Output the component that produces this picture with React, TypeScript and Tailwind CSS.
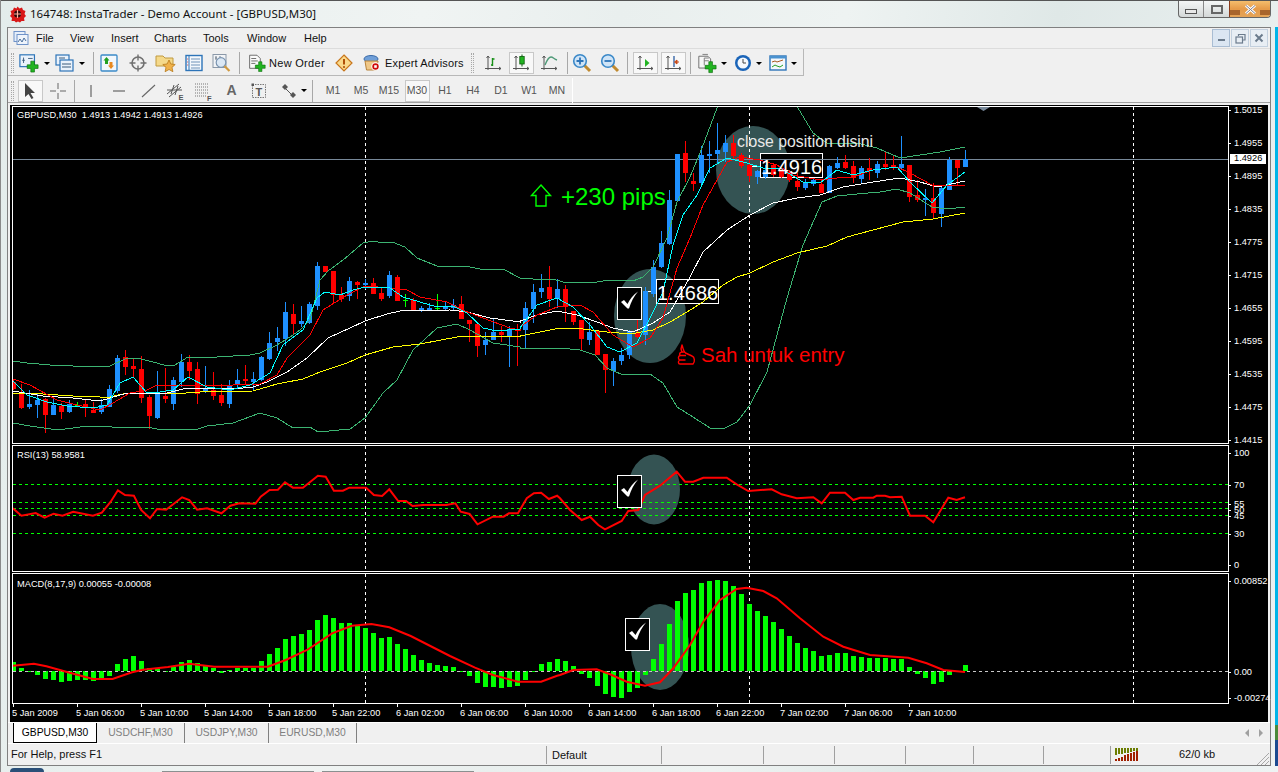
type Bar = [string, number, number, number, number];

// candle bodies and wicks as read off the chart: colour, body top, body bottom, wick top, wick bottom
const BARS_LEFT: Bar[] = [
  ["r",455,478,450,480],["r",487,534,462,536],["b",522,531,480,537],["b",510,525,490,563],["r",508,555,505,608],
  ["b",525,555,508,556],["r",528,546,520,567],["b",522,546,510,550],["g",525,526,515,530],["r",522,532,510,560],
  ["r",541,549,515,549],["b",525,546,508,552],["b",477,530,465,532],["b",384,483,375,490],["r",381,411,360,435],
  ["r",408,417,388,440],["r",417,503,378,518],["r",501,558,495,597],["b",492,564,423,566],["r",498,507,414,518],
  ["b",450,522,441,540],["b",396,456,372,470],["r",396,423,376,450],["r",417,491,395,522],["b",475,486,408,490],
  ["r",480,498,426,510],["r",495,519,462,528],["b",465,522,450,534],["b",450,465,417,475],["r",447,453,405,465],
  ["b",447,456,426,480],["b",381,450,378,452],["b",339,387,306,390],["b",324,336,292,362],["b",246,327,216,348],
  ["r",252,282,222,315],["b",273,282,228,291],["b",222,280,215,282],["b",108,228,96,240],["r",108,126,108,126],
  ["r",123,195,123,222],["r",195,207,170,215],["b",153,198,141,213],["r",156,165,153,207],["b",159,165,147,176],
  ["r",159,192,144,192],["r",190,207,175,213],["b",135,198,123,204],["r",141,213,135,213],["g",210,211,193,231],
  ["r",210,243,205,243],["b",234,243,228,246],["b",234,240,218,243],["g",233,234,192,240],["b",228,237,215,240],
  ["b",226,234,207,240],["r",222,267,198,267],["r",270,282,270,335],["r",282,348,282,381],["b",330,345,306,375],
  ["b",306,330,268,330],["r",306,315,288,336],["b",297,318,288,411],["r",297,303,282,408],
];
const BARS_RIGHT: Bar[] = [
  ["b",609,675,590,730],["b",561,612,537,655],["b",549,561,507,580],["r",546,582,484,606],["b",552,582,522,610],
  ["r",552,606,540,650],["r",618,650,618,660],["r",645,702,645,735],["b",681,705,650,720],["r",678,750,678,750],
  ["r",747,795,747,864],["b",768,798,760,843],["b",750,768,730,780],["b",678,750,675,762],["r",684,696,645,700],
  ["b",559,690,545,720],["b",486,567,465,575],["b",414,486,378,490],["b",285,417,255,420],["b",147,288,147,290],
  ["r",144,204,108,230],["r",228,237,204,258],["b",150,234,123,240],["b",147,152,108,205],["b",135,147,54,175],
  ["b",114,141,90,170],["r",114,153,90,165],["r",150,183,144,190],["r",180,213,165,230],["b",198,216,195,237],
  ["b",195,215,180,222],["r",180,210,175,215],["r",195,216,185,220],["r",200,225,195,230],["r",228,246,205,258],
  ["b",234,249,222,255],["b",225,237,222,243],["r",237,264,225,264],["b",183,264,180,265],["b",174,189,156,192],
  ["r",171,189,150,192],["r",183,219,168,235],["b",189,222,183,237],["r",189,198,158,225],["b",177,204,168,219],
  ["r",177,186,138,195],["r",180,189,150,195],["b",177,189,93,195],["r",180,276,180,291],["r",270,285,225,291],
  ["b",279,285,252,333],["r",279,324,235,340],["b",249,327,240,366],["b",165,255,155,255],["r",165,189,165,240],
  ["b",162,186,135,186],
];

const COLORS: Record<string, string> = { r: "#ff0000", b: "#1e90ff", g: "#00ff00" };

const join = (a: number[][], b: number[][]) =>
  [...a.map(([x, y]) => `${Math.round(x / 3)},${Math.round(230 + y / 3)}`), ...b.map(([x, y]) => `${Math.round(520 + x / 3)},${Math.round(105 + y / 3)}`)].join(" ");

const UPPER = join(
  [[38,394],[80,400],[150,405],[220,409],[330,409],[380,385],[410,384],[470,400],[500,409],[525,405],[565,380],[650,380],[750,376],[780,370],[830,345],[870,320],[900,300],[930,270],[960,150],[985,122],[1030,90],[1090,38],[1120,33],[1150,38],[1175,35],[1215,50],[1250,85],[1310,108],[1395,108],[1440,116],[1510,118],[1560,143]],
  [[0,518],[40,522],[100,522],[130,530],[230,532],[270,525],[340,528],[370,515],[400,485],[440,400],[470,290],[510,215],[545,130],[592,8],[620,-60],[800,-60],[835,8],[880,85],[920,115],[1010,115],[1070,130],[1140,158],[1200,150],[1260,140],[1335,125]]
);
const LOWER = join(
  [[38,580],[90,588],[175,601],[240,590],[300,588],[370,593],[440,592],[470,598],[535,601],[595,598],[620,588],[700,578],[780,550],[830,565],[880,595],[930,590],[955,607],[1050,598],[1095,565],[1150,490],[1190,450],[1240,360],[1310,295],[1370,283],[1410,300],[1480,340],[1560,350]],
  [[0,730],[60,733],[120,728],[180,735],[225,750],[260,790],[310,810],[390,806],[430,835],[470,905],[520,935],[570,968],[610,973],[650,950],[690,900],[740,800],[800,580],[850,420],[905,290],[950,272],[1010,268],[1080,262],[1130,252],[1170,265],[1235,305],[1280,312],[1335,307]]
);
const YELLOW = join(
  [[38,490],[130,493],[220,498],[300,502],[330,500],[380,490],[440,490],[520,492],[600,487],[760,484],[830,463],[910,448],[960,425],[1040,398],[1095,375],[1180,352],[1260,342],[1370,322],[1440,318],[1560,320]],
  [[0,692],[60,680],[120,670],[190,671],[260,680],[330,686],[400,675],[450,650],[500,620],[550,590],[610,540],[650,515],[690,505],[760,470],[830,443],[920,422],[980,395],[1060,375],[1150,350],[1240,342],[1335,325]]
);
const WHITE = join(
  [[38,482],[130,497],[220,505],[300,512],[330,505],[380,488],[440,490],[500,490],[550,478],[620,475],[700,477],[760,472],[800,455],[860,425],[920,385],[985,325],[1050,295],[1095,273],[1160,252],[1200,242],[1350,240],[1400,245],[1470,265],[1560,275]],
  [[0,648],[50,630],[110,618],[170,630],[230,650],[280,670],[340,680],[400,655],[450,620],[510,515],[550,440],[620,375],[690,330],[760,295],[830,280],[900,270],[970,245],[1060,232],[1140,220],[1200,232],[1250,245],[1335,228]]
);
const RED = join(
  [[38,448],[90,465],[170,510],[230,525],[300,540],[340,520],[390,490],[440,480],[470,466],[560,465],[650,468],[700,465],[780,462],[830,435],[860,385],[930,315],[970,240],[1040,195],[1095,168],[1170,175],[1220,180],[1260,200],[1340,215],[1395,242],[1450,265],[1530,295],[1560,300]],
  [[0,665],[50,630],[110,605],[180,600],[220,620],[280,690],[340,725],[390,700],[430,640],[470,490],[510,400],[550,300],[590,225],[620,170],[660,155],[720,165],[770,180],[820,210],[900,225],[950,220],[1000,215],[1060,195],[1130,185],[1170,205],[1235,240],[1335,242]]
);
const CYAN = join(
  [[38,452],[80,495],[140,515],[200,528],[280,535],[320,525],[360,460],[400,440],[440,490],[480,485],[520,480],[565,442],[620,470],[690,480],[750,465],[810,430],[850,345],[910,300],[950,205],[975,187],[1020,195],[1060,180],[1095,170],[1170,175],[1210,200],[1260,215],[1310,232],[1360,228],[1400,250],[1450,295],[1490,302],[1560,298]],
  [[0,670],[50,600],[110,580],[160,605],[210,660],[260,725],[300,740],[350,715],[390,640],[430,560],[460,420],[490,330],[530,270],[570,190],[620,160],[680,175],[730,190],[780,190],[850,230],[900,235],[950,195],[1000,210],[1060,195],[1130,185],[1170,230],[1235,295],[1280,240],[1335,200]]
);

const lowerJoin = (a: number[][], b: number[][]) =>
  [...a.map(([x, y]) => `${(x / 2.8).toFixed(1)},${(445 + y / 3).toFixed(1)}`), ...b.map(([x, y]) => `${(560 + x / 3).toFixed(1)},${(445 + y / 3).toFixed(1)}`)].join(" ");

const RSI = lowerJoin(
  [[36,190],[60,212],[100,204],[125,218],[150,206],[175,212],[205,200],[260,212],[285,203],[310,170],[330,136],[350,150],[375,152],[395,195],[420,220],[440,192],[465,194],[510,157],[530,165],[552,194],[580,190],[620,205],[645,182],[670,175],[715,176],[730,155],[755,135],[778,134],[798,112],[820,128],[848,128],[890,92],[912,95],[935,137],[960,137],[978,128],[1025,128],[1047,150],[1070,153],[1090,133],[1115,168],[1137,168],[1155,183],[1185,180],[1250,180],[1275,175],[1290,200],[1315,207],[1337,238],[1380,215],[1410,215],[1425,205],[1450,205],[1475,160],[1495,145],[1515,143],[1537,162],[1560,152]],
  [[0,160],[30,195],[65,225],[90,215],[115,240],[135,253],[185,228],[205,198],[235,195],[255,150],[300,122],[350,80],[375,110],[400,110],[430,98],[500,98],[530,118],[565,138],[635,133],[665,148],[710,160],[760,157],[785,175],[810,143],[855,143],[880,165],[900,158],[940,158],[950,152],[975,152],[990,157],[1025,155],[1050,212],[1095,212],[1120,232],[1165,158],[1190,165],[1215,157]]
);
const SIGNAL = lowerJoin(
  [[36,662],[95,656],[130,664],[190,682],[260,702],[315,702],[370,682],[400,674],[470,666],[530,656],[600,665],[750,665],[800,645],[860,615],[930,565],[985,542],[1040,537],[1090,547],[1150,573],[1260,633],[1330,668],[1380,690],[1450,710],[1515,710],[1560,692]],
  [[0,690],[40,675],[110,673],[150,688],[200,710],[255,722],[300,712],[340,670],[390,600],[430,530],[480,465],[530,432],[560,428],[610,438],[650,460],[720,520],[790,575],[850,605],[930,630],[1045,638],[1100,655],[1150,675],[1215,681]]
);

const MACD = [
  651,669,682,690,702,705,711,708,705,705,708,699,693,657,642,633,648,670,672,678,667,651,645,655,663,669,684,676,669,669,
  669,648,627,609,582,573,567,555,525,510,519,534,534,540,549,564,579,576,597,612,630,645,654,660,663,666,678,693,714,726,
  726,729,726,723,705,680,657,651,642,648,663,687,699,723,747,756,759,741,729,690,642,597,537,468,444,435,414,408,405,408,
  423,447,477,498,513,531,552,573,594,609,618,633,630,624,624,633,636,639,639,639,642,642,666,687,699,717,711,690,682,660,
];

const PRICES = ["1.5015","1.4955","1.4895","1.4835","1.4775","1.4715","1.4655","1.4595","1.4535","1.4475","1.4415"];
const TIMES = ["5 Jan 2009","5 Jan 06:00","5 Jan 10:00","5 Jan 14:00","5 Jan 18:00","5 Jan 22:00","6 Jan 02:00","6 Jan 06:00","6 Jan 10:00","6 Jan 14:00","6 Jan 18:00","6 Jan 22:00","7 Jan 02:00","7 Jan 06:00","7 Jan 10:00"];
const MENU = [
  { label: "File", width: "w-[34px]" },
  { label: "View", width: "w-[41px]" },
  { label: "Insert", width: "w-[43px]" },
  { label: "Charts", width: "w-[49px]" },
  { label: "Tools", width: "w-[44px]" },
  { label: "Window", width: "w-[57px]" },
  { label: "Help", width: "w-[30px]" },
];
const PERIODS = ["M1","M5","M15","M30","H1","H4","D1","W1","MN"];

function GridLines({ y1, y2 }: { y1: number; y2: number }) {
  return (
    <g stroke="#ffffff" strokeDasharray="3 3" shapeRendering="crispEdges">
      {[365, 749, 1133].map((x) => (
        <line key={x} x1={x} x2={x} y1={y1} y2={y2} />
      ))}
    </g>
  );
}

function Candles() {
  const draw = (bar: Bar, i: number, y: (v: number) => number) => {
    const x = 13 + 8 * i;
    const top = y(bar[1]);
    return (
      <g key={i} fill={COLORS[bar[0]]}>
        <rect x={x} y={y(bar[3])} width={1} height={Math.max(1, y(bar[4]) - y(bar[3]))} />
        {bar[0] === "g" ? (
          <rect x={x - 2} y={top} width={5} height={1} />
        ) : (
          <rect x={x - 2} y={top} width={5} height={Math.max(1, y(bar[2]) - top)} />
        )}
      </g>
    );
  };
  return (
    <g shapeRendering="crispEdges">
      {BARS_LEFT.map((bar, i) => draw(bar, i, (v) => Math.round(230 + v / 3)))}
      {BARS_RIGHT.map((bar, i) => draw(bar, i + 64, (v) => Math.round(105 + v / 3)))}
    </g>
  );
}

function CheckBox({ x, y }: { x: number; y: number }) {
  return (
    <g transform={`translate(${x} ${y})`}>
      <rect x="0.5" y="0.5" width="24" height="32" fill="#000000" stroke="#ffffff" shapeRendering="crispEdges" />
      <path d="M4 15 L7 13 L10.5 17 C13 12 16 8 21 4.5 C17 9 14 15 12 21.5 L10.5 21.5 Z" fill="#ffffff" />
    </g>
  );
}

function PricePane() {
  return (
    <div className="relative h-[338px] w-[1217px] border border-white overflow-hidden">
      <svg viewBox="13 107 1215 336" className="block h-[336px] w-[1215px]">
        <ellipse cx="753" cy="170" rx="37" ry="44" fill="#345353" />
        <ellipse cx="650" cy="316" rx="36" ry="47" fill="#345353" />
        <g fill="#000000" stroke="#ffffff" shapeRendering="crispEdges">
          <rect x="760.5" y="153.5" width="62" height="24" />
          <rect x="656.5" y="279.5" width="62" height="24" />
        </g>
        <g stroke="#ffffff" shapeRendering="crispEdges">
          <line x1="752" x2="760" y1="166.5" y2="166.5" />
          <line x1="646" x2="656" y1="291.5" y2="291.5" />
        </g>
        <GridLines y1={107} y2={443} />
        <line x1="13" x2="1228" y1="159.5" y2="159.5" stroke="#778899" shapeRendering="crispEdges" />
        <polygon points="977,107 990,107 983.5,111" fill="#778899" />
        <Candles />
        <g fill="none" shapeRendering="crispEdges">
          <polyline points={UPPER} stroke="#3cb371" />
          <polyline points={LOWER} stroke="#3cb371" />
          <polyline points={YELLOW} stroke="#ffff00" />
          <polyline points={WHITE} stroke="#ffffff" />
          <polyline points={RED} stroke="#ff0000" />
          <polyline points={CYAN} stroke="#00ffff" />
        </g>
        <polygon points="541,185 550.5,195.5 546,195.5 546,206 536,206 536,195.5 531.5,195.5" fill="none" stroke="#00ff00" strokeWidth="1.4" />
        <CheckBox x={617} y={287} />
        <g transform="translate(670 340)" fill="none" stroke="#ff0000" strokeWidth="1.4" strokeLinejoin="round">
          <path d="M12 5 C13.500 9 13 11 15.500 13 L22 16 C25 17 25 22 23 24 L10 24 C8 24 8 21 9.500 20 C8 19 8 16 10 15.500 C9 14 10 12 12 12 L11 9 Z" />
          <path d="M10 15.500h6M9.500 20h6M12 12h3" />
        </g>
      </svg>
      <div className="absolute left-[4px] top-[3px] text-[9.25px] leading-[10px] text-white whitespace-pre">GBPUSD,M30  1.4913 1.4942 1.4913 1.4926</div>
      <div className="absolute left-[548px] top-[76px] text-[24px] leading-[28px] text-[#00ff00]">+230 pips</div>
      <div className="absolute left-[724px] top-[26px] text-[15.8px] leading-[18px] text-[#e8e8e8]">close position disini</div>
      <div className="absolute left-[748px] top-[48px] text-[20px] leading-[24px] text-white">1.4916</div>
      <div className="absolute left-[644px] top-[174px] text-[20px] leading-[24px] text-white">1.4686</div>
      <div className="absolute left-[688px] top-[236px] text-[20.5px] leading-[24px] text-[#ff0000]">Sah untuk entry</div>
    </div>
  );
}

function RsiPane() {
  return (
    <div className="relative mt-px h-[127px] w-[1217px] border border-white overflow-hidden">
      <svg viewBox="13 446 1215 125" className="block h-[125px] w-[1215px]">
        <ellipse cx="654" cy="489.5" rx="26" ry="35" fill="#345353" />
        <GridLines y1={446} y2={571} />
        <g stroke="#00ff00" strokeDasharray="3 3" shapeRendering="crispEdges">
          {[484, 502, 508, 515, 533].map((y) => (
            <line key={y} x1={13} x2={1228} y1={y + 0.5} y2={y + 0.5} />
          ))}
        </g>
        <polyline points={RSI} fill="none" stroke="#ff0000" strokeWidth="2" />
        <CheckBox x={617} y={475} />
      </svg>
      <div className="absolute left-[4px] top-[4px] text-[9.25px] leading-[10px] text-white">RSI(13) 58.9581</div>
    </div>
  );
}

function MacdPane() {
  return (
    <div className="relative mt-px h-[131px] w-[1217px] border border-white overflow-hidden">
      <svg viewBox="13 574 1215 129" className="block h-[129px] w-[1215px]">
        <ellipse cx="660" cy="647" rx="29" ry="43" fill="#345353" />
        <GridLines y1={574} y2={703} />
        <g fill="#00ff00" shapeRendering="crispEdges">
          {MACD.map((z, i) => {
            const y = Math.round(445 + z / 3);
            return <rect key={i} x={11 + 8 * i} y={Math.min(y, 671)} width={5} height={Math.max(1, Math.abs(y - 671))} />;
          })}
        </g>
        <line x1="13" x2="1228" y1="671.5" y2="671.5" stroke="#c8c8c8" strokeDasharray="3 3" shapeRendering="crispEdges" />
        <polyline points={SIGNAL} fill="none" stroke="#ff0000" strokeWidth="2" />
        <CheckBox x={625} y={618} />
      </svg>
      <div className="absolute left-[4px] top-[5px] text-[9.25px] leading-[10px] text-white">MACD(8,17,9) 0.00055 -0.00008</div>
    </div>
  );
}

function AxisLabel({ label, className }: { label: string; className?: string }) {
  return (
    <div className={`flex items-center text-[9.25px] text-white ${className ?? ""}`}>
      <span className="h-px w-[2px] shrink-0 bg-white" />
      <span className="ml-[3px] whitespace-nowrap leading-[6px]">{label}</span>
    </div>
  );
}

function ChartArea() {
  return (
    <div className="mx-[2px] flex h-[617px] flex-col bg-black pl-[2px] pt-px">
      <div className="flex">
        <PricePane />
        <div className="relative flex h-[338px] flex-col gap-[25px]">
          {PRICES.map((p) => (
            <AxisLabel key={p} label={p} className="h-[8px]" />
          ))}
          <div className="absolute left-[1px] top-[48px] flex h-[10px] w-[36px] items-center bg-white pl-[4px] text-[9.25px] leading-none text-black">1.4926</div>
        </div>
      </div>
      <div className="flex">
        <div>
          <RsiPane />
        </div>
        <div className="mt-px flex h-[127px] flex-col">
          <AxisLabel label="100" className="mt-[8px] h-0" />
          <AxisLabel label="70" className="mt-[32px] h-0" />
          <AxisLabel label="55" className="mt-[19px] h-0" />
          <AxisLabel label="50" className="mt-[6px] h-0" />
          <AxisLabel label="45" className="mt-[6px] h-0" />
          <AxisLabel label="30" className="mt-[18px] h-0" />
          <AxisLabel label="0" className="mt-[31px] h-0" />
        </div>
      </div>
      <div className="flex">
        <div>
          <MacdPane />
        </div>
        <div className="mt-px flex h-[131px] flex-col">
          <AxisLabel label="0.00852" className="mt-[8px] h-0" />
          <AxisLabel label="0.00" className="mt-[91px] h-0" />
          <AxisLabel label="-0.00274" className="mt-[26px] h-0" />
        </div>
      </div>
      <div className="flex w-[1217px]">
        {TIMES.map((t) => (
          <div key={t} className="w-[64px] shrink-0">
            <div className="ml-px h-[3px] w-px bg-white" />
            <div className="mt-[1px] whitespace-nowrap text-[9.25px] leading-[11px] text-white">{t}</div>
          </div>
        ))}
      </div>
    </div>
  );
}

/* ---- toolbar icons ---- */

function Axes() {
  return <path d="M5 3v14M2 15.5h16M3.5 5L5 3l1.5 2M16 14l2 1.5-2 1.5" fill="none" stroke="#555" strokeWidth="1" />;
}

function Plus() {
  return <path d="M13 9h4v4h4v4h-4v4h-4v-4H9v-4h4z" fill="#22b422" stroke="#0a6a0a" strokeWidth="0.7" />;
}

const icons = {
  mdi: (
    <svg width="16" height="16" viewBox="0 0 16 16">
      <rect x="1" y="1.5" width="11" height="10" fill="#e6eefa" stroke="#6f92c8" />
      <rect x="4" y="4.5" width="11" height="10" fill="#eef3fb" stroke="#6f92c8" />
      <path d="M5 12l2-3 2 3 2-4 2 3" fill="none" stroke="#4a6f9c" />
    </svg>
  ),
  newChart: (
    <svg width="22" height="20" viewBox="0 0 22 22">
      <rect x="1" y="2" width="16" height="13" fill="#eaf2fb" stroke="#2d74b8" strokeWidth="1.3" />
      <path d="M5 5v6M3.5 8h3M10 6h5" stroke="#3a5a7a" strokeWidth="1" />
      <Plus />
    </svg>
  ),
  profiles: (
    <svg width="20" height="20" viewBox="0 0 20 20">
      <rect x="1" y="2" width="13" height="10" fill="#eaf2fb" stroke="#2d74b8" strokeWidth="1.2" />
      <rect x="5" y="7" width="13" height="11" fill="#eaf2fb" stroke="#2d74b8" strokeWidth="1.2" />
      <path d="M7 11h9M7 14h9M4 5h6" stroke="#3a5a7a" strokeWidth="1" />
    </svg>
  ),
  market: (
    <svg width="18" height="18" viewBox="0 0 18 18">
      <rect x="1" y="1" width="16" height="16" rx="1" fill="#f2f7fc" stroke="#3b8ac8" strokeWidth="1.3" />
      <path d="M6.500 3l3 3.500H8V10H5V6.500H3.500z" fill="#22a022" />
      <path d="M11 15l-3-3.500h1.500V8h3v3.500H14z" fill="#e88a20" />
    </svg>
  ),
  cross: (
    <svg width="20" height="20" viewBox="0 0 20 20" fill="none" stroke="#707070">
      <circle cx="10" cy="10" r="6" strokeWidth="1.6" />
      <path d="M10 1.500v6M10 12.500v6M1.500 10h6M12.500 10h6" strokeWidth="1.4" />
    </svg>
  ),
  navigator: (
    <svg width="22" height="20" viewBox="0 0 22 20">
      <path d="M1 3h7l2 2h8v8H1z" fill="#f5d98a" stroke="#c09a40" />
      <path d="M14 7l1.900 4 4.300.5-3.200 2.900.9 4.300-3.900-2.200-3.900 2.200.9-4.300-3.200-2.900 4.300-.5z" fill="#f0b24a" stroke="#b87818" strokeWidth="0.8" />
    </svg>
  ),
  terminal: (
    <svg width="18" height="18" viewBox="0 0 18 18">
      <rect x="1" y="1.500" width="16" height="15" fill="#f4f8fc" stroke="#2d74b8" strokeWidth="1.4" />
      <path d="M4 2v14" stroke="#2d74b8" />
      <path d="M6 5h9M6 8h9M6 11h9M6 14h9" stroke="#6f92b8" />
      <path d="M2.200 5h1M2.200 8h1M2.200 11h1" stroke="#d04040" />
    </svg>
  ),
  tester: (
    <svg width="20" height="20" viewBox="0 0 20 20">
      <rect x="1" y="1.500" width="13" height="13" fill="#f2f4f7" stroke="#8a98a8" />
      <path d="M4 3v4M3 5h2M8 3v5M7 6h2" stroke="#707c88" />
      <circle cx="9" cy="9.500" r="4.800" fill="#dbe8f5" stroke="#7a94b0" strokeWidth="1.2" />
      <path d="M12.500 13l5 5" stroke="#d09a40" strokeWidth="2.2" />
    </svg>
  ),
  newOrder: (
    <svg width="18" height="18" viewBox="0 0 22 21" className="mr-[3px]">
      <path d="M2 1h9l4 4v12H2z" fill="#fafafa" stroke="#555" strokeWidth="1" />
      <path d="M4 5h6M4 8h8M4 11h5" stroke="#555" />
      <Plus />
    </svg>
  ),
  warn: (
    <svg width="18" height="18" viewBox="0 0 18 18">
      <path d="M9 1l8 8-8 8-8-8z" fill="#fad98a" stroke="#c8761c" strokeWidth="1.2" />
      <path d="M9 5v5.500" stroke="#b05008" strokeWidth="2" />
      <circle cx="9" cy="13" r="1.100" fill="#b05008" />
    </svg>
  ),
  expert: (
    <svg width="18" height="18" viewBox="0 0 18 18">
      <ellipse cx="8" cy="5" rx="7" ry="3.500" fill="#6f9fd8" stroke="#3a6aa8" />
      <path d="M2 7h13l-1.500 9h-10z" fill="#f0c888" stroke="#b88238" />
      <circle cx="12.500" cy="12.500" r="4.200" fill="#ffffff" />
      <circle cx="12.500" cy="12.500" r="3.200" fill="#d00a0a" />
      <rect x="11.200" y="11.200" width="2.600" height="2.600" fill="#ffffff" />
    </svg>
  ),
  bars: (
    <svg width="20" height="20" viewBox="0 0 20 20">
      <Axes />
      <path d="M9.500 5v8M9.500 12H8M9.500 6H11.500" stroke="#189018" strokeWidth="1.4" fill="none" />
    </svg>
  ),
  candle: (
    <svg width="20" height="20" viewBox="0 0 20 20">
      <Axes />
      <path d="M11 1.500v12" stroke="#0a5a0a" />
      <rect x="8.800" y="3.500" width="4.400" height="7.500" fill="#22b422" stroke="#0a5a0a" strokeWidth="0.8" />
    </svg>
  ),
  line: (
    <svg width="20" height="20" viewBox="0 0 20 20">
      <Axes />
      <path d="M6 12C8 7 10 4 12 4s3 2 6 3" stroke="#4f9a78" strokeWidth="1.4" fill="none" />
    </svg>
  ),
  zoomIn: (
    <svg width="20" height="20" viewBox="0 0 20 20">
      <path d="M12 12l6 6" stroke="#c08a30" strokeWidth="3" />
      <circle cx="8" cy="8" r="6.300" fill="#cfe4f7" stroke="#3a88c8" strokeWidth="1.6" />
      <path d="M4.500 8h7M8 4.500v7" stroke="#2d74b8" strokeWidth="1.8" />
    </svg>
  ),
  zoomOut: (
    <svg width="20" height="20" viewBox="0 0 20 20">
      <path d="M12 12l6 6" stroke="#c08a30" strokeWidth="3" />
      <circle cx="8" cy="8" r="6.300" fill="#cfe4f7" stroke="#3a88c8" strokeWidth="1.6" />
      <path d="M4.500 8h7" stroke="#2d74b8" strokeWidth="1.8" />
    </svg>
  ),
  autoScroll: (
    <svg width="20" height="20" viewBox="0 0 20 20">
      <Axes />
      <path d="M10 6l4.500 4-4.500 4z" fill="#22b422" />
    </svg>
  ),
  shift: (
    <svg width="20" height="20" viewBox="0 0 20 20">
      <Axes />
      <path d="M11 3v11" stroke="#1a4f9a" strokeWidth="1.2" />
      <path d="M16 9h-2.500M11.500 9l2.500-2v4z" fill="#c84a18" stroke="#c84a18" />
    </svg>
  ),
  template: (
    <svg width="20" height="21" viewBox="0 0 22 22">
      <path d="M2 3h10l3 3v10H2z" fill="#f7f7f7" stroke="#666" />
      <path d="M6 1h6M8 5h5M8 8h5M8 5v8" stroke="#777" />
      <Plus />
    </svg>
  ),
  clock: (
    <svg width="18" height="18" viewBox="0 0 18 18">
      <circle cx="9" cy="9" r="8" fill="#1a64b8" />
      <circle cx="9" cy="9" r="5.500" fill="#f4f8fc" />
      <path d="M9 5v4h3" stroke="#444" fill="none" />
    </svg>
  ),
  windows: (
    <svg width="18" height="16" viewBox="0 0 18 16">
      <rect x="1" y="1" width="16" height="14" fill="#f4f8fc" stroke="#2d74b8" strokeWidth="1.4" />
      <rect x="1" y="1" width="16" height="2.500" fill="#4a92d0" />
      <path d="M3 7l3-1 2 1 3-1 3-1" stroke="#a85a20" fill="none" />
      <path d="M3 12l3-2 2 1 3 1 3-2" stroke="#22a022" fill="none" />
    </svg>
  ),
  cursor: (
    <svg width="16" height="18" viewBox="0 0 16 18">
      <path d="M3 1v14l3.500-3 3 5 2-1-3-5h4.500z" fill="#444" />
    </svg>
  ),
  crosshair: (
    <svg width="18" height="18" viewBox="0 0 18 18" stroke="#666">
      <path d="M9 1v6M9 11v6M1 9h6M11 9h6" />
    </svg>
  ),
  vertical: (
    <svg width="14" height="14" viewBox="0 0 14 14" stroke="#666" strokeWidth="1.2">
      <path d="M7 1v12" />
    </svg>
  ),
  horizontal: (
    <svg width="14" height="14" viewBox="0 0 14 14" stroke="#666" strokeWidth="1.2">
      <path d="M1 7h12" />
    </svg>
  ),
  trend: (
    <svg width="16" height="16" viewBox="0 0 16 16" stroke="#666" strokeWidth="1.1">
      <path d="M2 14L15 2" />
    </svg>
  ),
  channel: (
    <svg width="20" height="20" viewBox="0 0 20 20" stroke="#555">
      <path d="M1 13L13 3M3 16L15 6M5 13l3-9M9 14l3-9M1 9h15" strokeWidth="1" />
      <text x="12.500" y="19" fontSize="7.500" fill="#555" stroke="none" fontFamily="Liberation Sans" fontWeight="700">E</text>
    </svg>
  ),
  fib: (
    <svg width="20" height="20" viewBox="0 0 20 20" stroke="#777" strokeDasharray="1 1">
      <path d="M1 3h14M1 6h14M1 9h14M1 12h14M1 15h11" />
      <text x="13" y="19.500" fontSize="7.500" fill="#555" stroke="none" fontFamily="Liberation Sans" fontWeight="700">F</text>
    </svg>
  ),
  textBox: (
    <svg width="16" height="16" viewBox="0 0 16 16">
      <rect x="1.500" y="1.500" width="13" height="13" fill="none" stroke="#777" strokeDasharray="1.500 1" />
      <rect x="0.500" y="0.500" width="2.500" height="2.500" fill="#555" />
      <text x="4.500" y="12.500" fontSize="11" fill="#555" fontFamily="Liberation Sans" fontWeight="700">T</text>
    </svg>
  ),
  arrows: (
    <svg width="16" height="16" viewBox="0 0 16 16" fill="#555">
      <path d="M1 4l3-3 3 3-3 3z" />
      <path d="M9 12l3-3 3 3-3 3z" />
      <path d="M5 6l5 5" stroke="#555" />
    </svg>
  ),
};

function Grip() {
  return <div className="h-[20px] w-[3px] shrink-0 border-x border-dotted border-[#a8a8a8]" />;
}

function Sep({ className }: { className?: string }) {
  return <div className={`h-[22px] w-px shrink-0 bg-[#a8a8a8] ${className ?? ""}`} />;
}

function Btn({ children, width, active }: { children: React.ReactNode; width: string; active?: boolean }) {
  return (
    <div className={`flex h-[24px] shrink-0 items-center justify-center ${width}`}>
      <div className={`flex h-[22px] w-[25px] items-center justify-center ${active ? "border border-[#c8c8c8] bg-[#f8f8f8]" : ""}`}>{children}</div>
    </div>
  );
}

function DropBtn({ children, width }: { children: React.ReactNode; width: string }) {
  return (
    <div className={`flex h-[24px] shrink-0 items-center justify-center gap-[4px] ${width}`}>
      {children}
      <span className="h-0 w-0 border-x-[3px] border-t-[3px] border-x-transparent border-t-black" />
    </div>
  );
}

function ToolbarMain() {
  return (
    <div className="flex h-[27px] w-[796px] items-center border-b border-r border-b-[#b8b8b8] border-r-[#b8b8b8] pl-[3px] pt-[2px]">
      <Grip />
      <DropBtn width="ml-[3px] w-[34px]">{icons.newChart}</DropBtn>
      <DropBtn width="ml-[2px] w-[34px]">{icons.profiles}</DropBtn>
      <Sep className="ml-[6px]" />
      <Btn width="w-[29px]">{icons.market}</Btn>
      <Btn width="w-[29px]">{icons.cross}</Btn>
      <Btn width="w-[28px]">{icons.navigator}</Btn>
      <Btn width="w-[28px]">{icons.terminal}</Btn>
      <Btn width="w-[28px]">{icons.tester}</Btn>
      <Sep className="ml-[3px]" />
      <div className="ml-[8px] flex h-[24px] w-[84px] shrink-0 items-center text-[11px] tracking-[0.3px] text-[#111]">
        {icons.newOrder}
        <span className="whitespace-nowrap">New Order</span>
      </div>
      <Btn width="w-[24px]">{icons.warn}</Btn>
      <div className="flex h-[24px] w-[115px] shrink-0 items-center gap-[4px] pl-[7px] text-[11px] tracking-[0.15px] text-[#111]">
        {icons.expert}
        <span className="whitespace-nowrap">Expert Advisors</span>
      </div>
      <Grip />
      <Btn width="ml-[5px] w-[28px]">{icons.bars}</Btn>
      <Btn width="w-[28px]" active>{icons.candle}</Btn>
      <Btn width="w-[28px]">{icons.line}</Btn>
      <Sep className="ml-[4px]" />
      <Btn width="w-[28px]">{icons.zoomIn}</Btn>
      <Btn width="w-[28px]">{icons.zoomOut}</Btn>
      <Sep className="ml-[3px]" />
      <Btn width="ml-[3px] w-[28px]" active>{icons.autoScroll}</Btn>
      <Btn width="w-[28px]" active>{icons.shift}</Btn>
      <Sep className="ml-[3px]" />
      <DropBtn width="ml-[4px] w-[34px]">{icons.template}</DropBtn>
      <DropBtn width="ml-[2px] w-[34px]">{icons.clock}</DropBtn>
      <DropBtn width="w-[36px]">{icons.windows}</DropBtn>
    </div>
  );
}

function ToolbarDraw() {
  return (
    <div className="flex h-[27px] items-center border-b border-b-[#a0a0a0] pl-[3px] pt-[3px]">
      <Grip />
      <Btn width="ml-[2px] w-[28px]" active>{icons.cursor}</Btn>
      <Btn width="w-[28px]">{icons.crosshair}</Btn>
      <Sep className="ml-[2px]" />
      <Btn width="ml-[2px] w-[28px]">{icons.vertical}</Btn>
      <Btn width="w-[28px]">{icons.horizontal}</Btn>
      <Btn width="ml-px w-[28px]">{icons.trend}</Btn>
      <Btn width="w-[28px]">{icons.channel}</Btn>
      <Btn width="w-[28px]">{icons.fib}</Btn>
      <Btn width="w-[27px]"><span className="text-[14px] font-bold text-[#666]">A</span></Btn>
      <Btn width="w-[28px]">{icons.textBox}</Btn>
      <DropBtn width="ml-[4px] w-[33px]">{icons.arrows}</DropBtn>
      <Sep className="ml-[2px]" />
      <div className="ml-[6px] flex">
        {PERIODS.map((p) => (
          <Btn key={p} width="w-[28px]" active={p === "M30"}>
            <span className="text-[10.5px] text-[#555]">{p}</span>
          </Btn>
        ))}
      </div>
      <div className="ml-px h-[25px] w-px bg-white" />
    </div>
  );
}

function Mdi({ children, active }: { children: React.ReactNode; active?: boolean }) {
  return (
    <div className={`flex h-[18px] w-[18px] items-center justify-center border ${active ? "border-[#a9bdd3] bg-[#dbe6f2]" : "border-[#c3d0de] bg-[#e8eef4]"}`}>
      {children}
    </div>
  );
}

function TitleBar() {
  return (
    <div className="flex h-[27px] items-start border-t border-[#555] pl-[8px]">
      <svg width="17" height="17" viewBox="0 0 17 17" className="mt-[5px] shrink-0">
        <path d="M8.500 0.500l2 2 2.500-1 1 2.500 2.500 1-1 3 1.500 2-2 2 .5 3-3 0-1.500 1.500-2-1-2 1-1.500-1.500-3 0 .5-3-2-2 1.500-2-1-3 2.500-1 1-2.500 2.500 1z" fill="#d81818" />
        <circle cx="8.500" cy="8" r="3.500" fill="#2a0a0a" />
        <path d="M8.500 4v8M5 8h7" stroke="#ffb0a0" strokeWidth="1.200" />
      </svg>
      <div className="ml-[4px] mt-[3px] whitespace-nowrap text-[11.5px] leading-[20px] text-[#111]" style={{ fontFamily: "'Noto Sans', sans-serif" }}>
        164748: InstaTrader - Demo Account - [GBPUSD,M30]
      </div>
      <div className="ml-auto mr-[7px] flex h-[17px] overflow-hidden rounded-b-[4px] border-x border-b border-[#666] bg-[linear-gradient(#f4f6f6,#d4d8d8)]">
        <div className="flex w-[25px] items-end justify-center border-r border-[#888] pb-[3px]">
          <span className="h-[5px] w-[12px] border border-[#555] bg-[#e8e8e8]" />
        </div>
        <div className="flex w-[25px] items-center justify-center">
          <span className="h-[9px] w-[12px] border-[2px] border-[#666]" />
        </div>
        <div className="relative flex w-[41px] items-center justify-center overflow-hidden border-l border-[#8a3a1a] bg-[linear-gradient(#f4bd6c,#e59a48_50%,#e5a458)]">
          <span className="absolute left-0 top-[9px] h-[5px] w-[10px] bg-[#a8652c]" />
          <span className="absolute right-0 top-[9px] h-[5px] w-[10px] bg-[#a8652c]" />
          <svg width="13" height="11" viewBox="0 0 13 11" className="relative">
            <path d="M2 1.500l9 8M11 1.500l-9 8" stroke="#ffffff" strokeWidth="3" />
            <path d="M2 1.500l9 8M11 1.500l-9 8" stroke="#7a7a8a" strokeWidth="1" />
          </svg>
        </div>
      </div>
    </div>
  );
}

function MenuBar() {
  return (
    <div className="flex h-[21px] items-center border-b border-[#dcdcdc] pl-[5px]">
      {icons.mdi}
      <div className="ml-[7px] flex text-[11px] text-[#111]">
        {MENU.map((m) => (
          <span key={m.label} className={m.width}>{m.label}</span>
        ))}
      </div>
      <div className="ml-auto mr-[2px] flex gap-px">
        <Mdi active>
          <span className="mt-[4px] h-[2px] w-[7px] bg-[#6b7b8c]" />
        </Mdi>
        <Mdi>
          <svg width="11" height="11" viewBox="0 0 11 11" fill="none" stroke="#6b7b8c">
            <path d="M3.500 3V1.500H10V7H7.500" strokeWidth="1.200" />
            <rect x="1" y="4" width="6.500" height="6" strokeWidth="1.200" />
          </svg>
        </Mdi>
        <Mdi>
          <svg width="10" height="10" viewBox="0 0 10 10" stroke="#6b7b8c" strokeWidth="2">
            <path d="M1.500 1.500l7 7M8.500 1.500l-7 7" />
          </svg>
        </Mdi>
      </div>
    </div>
  );
}

function TabsBar() {
  return (
    <div className="flex h-[21px] items-start border-t border-white pl-[5px] text-[10.3px]">
      <div className="flex h-[20px] w-[84px] items-center justify-center border-b-[1.5px] border-l-[1.5px] border-r border-black bg-white text-black">GBPUSD,M30</div>
      <div className="flex h-[20px] w-[88px] items-center justify-center border-r border-[#808080] text-[#808080]">USDCHF,M30</div>
      <div className="mt-0 flex h-[20px] w-[84px] items-center justify-center border-r border-[#808080] text-[#808080]">USDJPY,M30</div>
      <div className="flex h-[20px] w-[88px] items-center justify-center border-r border-[#808080] text-[#808080]">EURUSD,M30</div>
      <div className="ml-auto mr-[7px] mt-[6px] flex gap-[10px]">
        <span className="h-0 w-0 border-y-[4px] border-r-[4px] border-y-transparent border-r-[#a0a0a0]" />
        <span className="h-0 w-0 border-y-[4px] border-l-[4px] border-y-transparent border-l-[#a0a0a0]" />
      </div>
    </div>
  );
}

function StatusBar() {
  return (
    <div className="relative flex h-[22px] items-center border-t border-white text-[11px] text-[#111]">
      <div className="w-[538px] pl-[3px]">For Help, press F1</div>
      <div className="h-[18px] w-[115px] border-l border-[#a0a0a0] pl-[5px] leading-[18px]">Default</div>
      <div className="h-[18px] w-[102px] border-l border-[#a0a0a0]" />
      <div className="h-[18px] w-[71px] border-l border-[#a0a0a0]" />
      <div className="h-[18px] w-[71px] border-l border-[#a0a0a0]" />
      <div className="h-[18px] w-[68px] border-l border-[#a0a0a0]" />
      <div className="h-[18px] w-[70px] border-l border-[#a0a0a0]" />
      <div className="h-[18px] w-[67px] border-l border-[#a0a0a0]" />
      <div className="flex h-[18px] items-center border-l border-[#a0a0a0] pl-[4px]">
        <svg width="24" height="13" viewBox="0 0 24 13" shapeRendering="crispEdges">
          {[0, 1, 2, 3, 4, 5, 6, 7].map((i) => (
            <g key={i}>
              <rect x={i * 3} y={0} width={2} height={7 - i * 0.6} fill="#6b7d00" />
              <rect x={i * 3} y={11 - i * 1.2} width={2} height={2 + i * 1.2} fill="#a02000" />
            </g>
          ))}
        </svg>
        <span className="ml-[40px] whitespace-nowrap">62/0 kb</span>
      </div>
      <svg width="16" height="13" viewBox="0 0 16 13" className="absolute bottom-0 right-0" stroke="#a8a8a8">
        <path d="M15 1L3 13M15 5l-8 8M15 9l-4 4" />
      </svg>
    </div>
  );
}

export default function App() {
  return (
    <div
      className="flex h-[772px] w-[1278px] flex-col overflow-hidden border-l border-[#8a8a8a] bg-[linear-gradient(100deg,#e3eceb_0%,#f0f4f3_30%,#e9efee_44%,#eef3f2_60%,#dfe8e7_75%,#eef3f3_100%)]"
      style={{ fontFamily: "'Liberation Sans', sans-serif" }}
    >
      <TitleBar />
      <div className="flex h-[739px] pl-[6px]">
        <div className="flex w-[1264px] shrink-0 flex-col border border-[#808080] bg-[#f0f0f0]">
          <MenuBar />
          <ToolbarMain />
          <ToolbarDraw />
          <div className="h-[2px]" />
          <ChartArea />
          <TabsBar />
          <StatusBar />
        </div>
        <div className="ml-[4px] flex w-[3px] flex-col">
          <div className="flex-1 bg-[#00b4e8]" />
          <div className="h-[15px] bg-[#4a8a3a]" />
          <div className="h-[26px] bg-[#1a4a90]" />
        </div>
      </div>
      <div className="flex h-[6px] items-end">
        <div className="ml-[9px] h-[4px] w-[34px] rounded-t-full bg-[#2a4f78]" />
        <div className="ml-[118px] h-px w-[152px] bg-[#8a9090]" />
        <div className="ml-[8px] h-px w-[152px] bg-[#8a9090]" />
      </div>
    </div>
  );
}
